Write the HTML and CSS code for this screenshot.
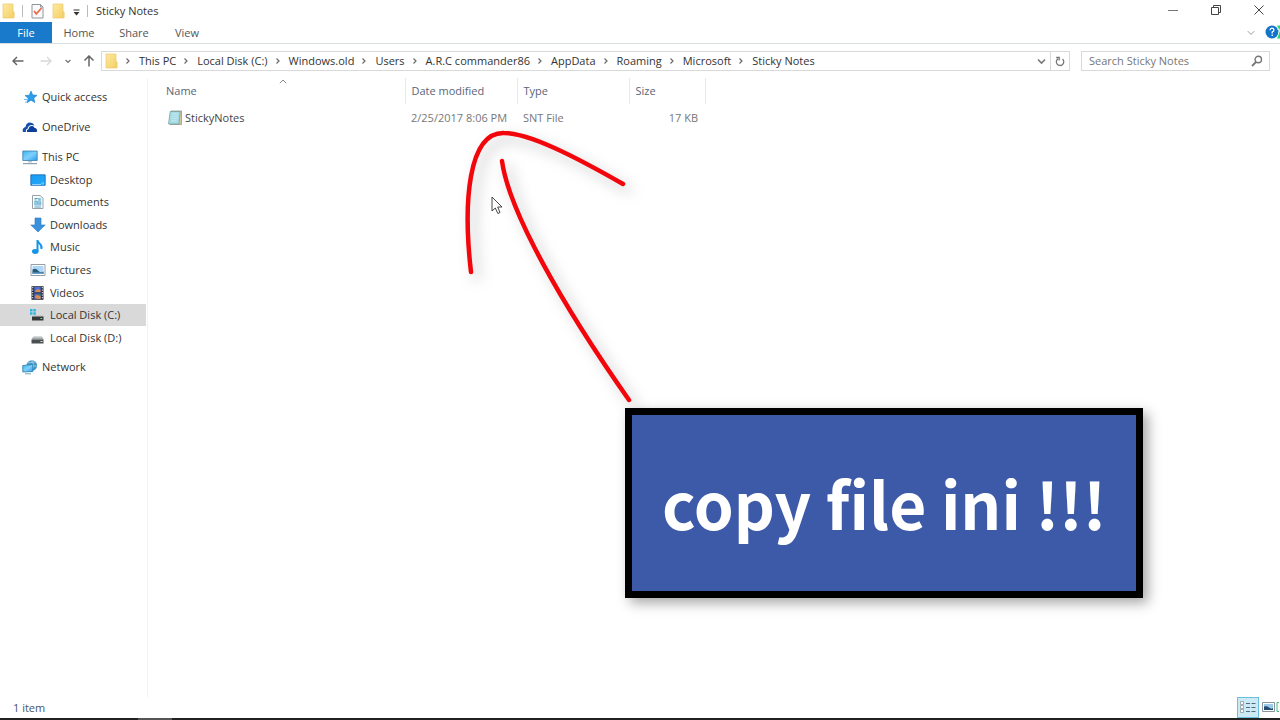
FILE: index.html
```html
<!DOCTYPE html>
<html lang="en">
<head>
<meta charset="utf-8">
<title>Sticky Notes</title>
<link rel="stylesheet" href="styles.css">
</head>
<body>
<svg class="defs" width="0" height="0" aria-hidden="true">
  <defs>
    <linearGradient id="gold" x2="1" y2="1"><stop stop-color="#ffe9a0"/><stop offset="1" stop-color="#f3cf66"/></linearGradient>
    <linearGradient id="screen" x2="1" y2="1"><stop stop-color="#38b6f5"/><stop offset=".5" stop-color="#7fd0fb"/><stop offset="1" stop-color="#2a9cec"/></linearGradient>
    <linearGradient id="sky" x2="1" y2="1"><stop stop-color="#189bf2"/><stop offset="1" stop-color="#23a9fb"/></linearGradient>
    <linearGradient id="metal" y2="1" x2="0"><stop stop-color="#e4e6e8"/><stop offset="1" stop-color="#8c8f92"/></linearGradient>
    <symbol id="folder" viewBox="0 0 13 16"><path d="M1 1h10v7l1 1v6H1z" fill="url(#gold)" stroke="#ecc967" stroke-width=".7"/><path d="M10 9h2.300v5.500H10z" fill="#f3d06a"/></symbol>
    <symbol id="sep" viewBox="0 0 6 8"><path d="M1.500 1.500 4 4 1.500 6.500" fill="none" stroke="#6a6a6a" stroke-width="1.200"/></symbol>
  </defs>
</svg>
<div class="window">
  <header class="titlebar">
    <svg class="folder" width="13" height="16"><use href="#folder"/></svg>
    <span class="bar"></span>
    <button class="quick" aria-label="Properties"><svg width="13" height="16" viewBox="0 0 13 16"><path d="M1 1.500h8.500L12 4v11H1z" fill="#fbfbfc" stroke="#8f979f"/><path d="M9.500 1.500V4H12" fill="none" stroke="#8f979f"/><path d="m3 8 2.300 2.800L10.500 5" fill="none" stroke="#ef6a4b" stroke-width="1.800"/></svg></button>
    <button class="quick" aria-label="New folder"><svg width="13" height="16"><use href="#folder"/></svg></button>
    <button class="quick menu" aria-label="Customize toolbar"><svg width="7" height="7" viewBox="0 0 7 7"><path d="M.5 1h6" stroke="#333"/><path d="M.5 3h6L3.500 6.500z" fill="#333"/></svg></button>
    <span class="bar"></span>
    <h1 class="title">Sticky Notes</h1>
    <div class="controls">
      <button aria-label="Minimize"><svg width="12" height="12" viewBox="0 0 12 12"><path d="M1 6.500h10" stroke="#777"/></svg></button>
      <button aria-label="Restore"><svg width="12" height="12" viewBox="0 0 12 12"><path d="M1.500 3.500h7v7h-7zM3.500 3V1.500h7v7H9" fill="none" stroke="#444"/></svg></button>
      <button aria-label="Close"><svg width="12" height="12" viewBox="0 0 12 12"><path d="m1.500 1.500 9 9m0-9-9 9" stroke="#444"/></svg></button>
    </div>
  </header>
  <nav class="tabs" aria-label="Ribbon">
    <button class="tab file">File</button>
    <button class="tab">Home</button>
    <button class="tab">Share</button>
    <button class="tab">View</button>
    <button class="expand" aria-label="Expand ribbon"><svg width="8" height="6" viewBox="0 0 8 6"><path d="m.8 1.200 3.200 3.200 3.200-3.200" fill="none" stroke="#999"/></svg></button>
    <button class="help" aria-label="Help"><svg width="15" height="14" viewBox="0 0 15 14"><circle cx="7" cy="7" r="6.500" fill="#1474c9"/><path d="M15 .5h-3q4 6 0 13h3z" fill="#2fd671"/><path d="M5 5.200Q5.200 3.200 7 3.200t1.900 1.700Q8.900 6 7.200 7v1.500m0 1v1.500" fill="none" stroke="#fff" stroke-width="1.300"/><path d="M12.500 5Q13.500 3 14.500 4.500T13.500 8v1" fill="none" stroke="#d8ffe4"/></svg></button>
  </nav>
  <div class="addressbar">
    <button class="nav" aria-label="Back"><svg width="12" height="10" viewBox="0 0 12 10"><path d="M5 1 1 5l4 4M1 5h10.500" fill="none" stroke="#666" stroke-width="1.500"/></svg></button>
    <button class="nav" aria-label="Forward"><svg width="12" height="10" viewBox="0 0 12 10"><path d="m7 1 4 4-4 4m4-4H.5" fill="none" stroke="#d8d8d8" stroke-width="1.400"/></svg></button>
    <button class="nav recent" aria-label="Recent locations"><svg width="6" height="5" viewBox="0 0 6 5"><path d="m.6 1 2.400 2.400L5.400 1" fill="none" stroke="#777" stroke-width="1.300"/></svg></button>
    <button class="nav up" aria-label="Up"><svg width="12" height="12" viewBox="0 0 12 12"><path d="M1.500 5.500 6 1l4.500 4.500M6 1v10.500" fill="none" stroke="#666" stroke-width="1.500"/></svg></button>
    <div class="path">
      <svg width="13" height="16"><use href="#folder"/></svg>
      <svg class="sep" width="6" height="8"><use href="#sep"/></svg><button>This PC</button>
      <svg class="sep" width="6" height="8"><use href="#sep"/></svg><button>Local Disk (C:)</button>
      <svg class="sep" width="6" height="8"><use href="#sep"/></svg><button>Windows.old</button>
      <svg class="sep" width="6" height="8"><use href="#sep"/></svg><button>Users</button>
      <svg class="sep" width="6" height="8"><use href="#sep"/></svg><button>A.R.C commander86</button>
      <svg class="sep" width="6" height="8"><use href="#sep"/></svg><button>AppData</button>
      <svg class="sep" width="6" height="8"><use href="#sep"/></svg><button>Roaming</button>
      <svg class="sep" width="6" height="8"><use href="#sep"/></svg><button>Microsoft</button>
      <svg class="sep" width="6" height="8"><use href="#sep"/></svg><button>Sticky Notes</button>
      <button class="drop" aria-label="Previous locations"><svg width="9" height="7" viewBox="0 0 9 7"><path d="m1 1.500 3.500 3.500L8 1.500" fill="none" stroke="#777" stroke-width="1.600"/></svg></button>
      <button class="refresh" aria-label="Refresh"><svg width="10" height="11" viewBox="0 0 10 11"><path d="M7.500 3A3.700 3.700 0 1 1 3 2.700M1.200 1.500h3v3" fill="none" stroke="#777" stroke-width="1.300"/></svg></button>
    </div>
    <label class="search">
      <input type="text" placeholder="Search Sticky Notes" aria-label="Search Sticky Notes">
      <svg width="12" height="12" viewBox="0 0 12 12"><circle cx="7.300" cy="4.500" r="3.200" fill="none" stroke="#777" stroke-width="1.400"/><path d="M5 7 1 11" stroke="#777" stroke-width="1.800"/></svg>
    </label>
  </div>
  <div class="body">
    <nav class="sidebar" aria-label="Navigation pane">
      <a class="item" href="#"><svg width="16" height="16" viewBox="0 0 16 16"><path d="m9 2 1.700 4 4.300.3-3.200 2.900 1 4.300L9 11.200l-3.900 2.500L6.200 9.300 3 6.500l4.300-.3z" fill="#2d9eea" stroke="#167bc9" stroke-width=".6"/><path d="M2 10.500h3M3 13h2" stroke="#68b8ee"/></svg>Quick access</a>
      <a class="item" href="#"><svg width="16" height="16" viewBox="0 0 16 16"><path d="M1 13C0 9.500 2 8.500 3.500 8 4 4 7 2.500 10 4c2 .8 2 2 2.300 2.700C9 5 6 7 5.500 9.800 4 10 3.500 11.500 4 13z" fill="#1650aa"/><path d="M5 13c-.5-1.500.5-2.800 1.600-2.700.2-3.500 4.500-4.500 6-1.200 2 0 3 2 2.200 3.900z" fill="#0c3f98"/></svg>OneDrive</a>
      <div class="group">
        <a class="item" href="#"><svg width="16" height="16" viewBox="0 0 16 16"><path d="M.8 2h14.400v9.500H.8z" fill="url(#screen)" stroke="#3d7ca8" stroke-width=".8"/><path d="M6 12h4v1.500H6z" fill="#b8cbd8"/><path d="M1 14.700h14" stroke="#78909f"/></svg>This PC</a>
        <a class="item sub" href="#"><svg width="16" height="16" viewBox="0 0 16 16"><path d="M.8 2.800h14.400v10.500H.8z" fill="url(#sky)" stroke="#1266b0" stroke-width=".8"/><path d="M2 12.500h9m1-2v2m1.500-2v2" stroke="#a9e1ff" stroke-width=".8"/></svg>Desktop</a>
        <a class="item sub" href="#"><svg width="16" height="16" viewBox="0 0 16 16"><path d="M2.500 1.500h7.500L13 4v10.500H2.500z" fill="#fff" stroke="#8b979f" stroke-width=".9"/><path d="M4.500 4.500h4M4.500 6h2m-2 7h6.500" stroke="#5799ba"/><path d="M4.300 7h7v4.500h-7z" fill="#6fb6d4"/><path d="M5 8.500h2M8 8h2.500M5 10h5.500M8 4h3v3H8z" fill="#72bad5" stroke="#b9e0ea" stroke-width=".7"/></svg>Documents</a>
        <a class="item sub" href="#"><svg width="16" height="16" viewBox="0 0 16 16"><path d="M5 1h6v7h4.200L8 15 .8 8H5z" fill="#3b91dc" stroke="#2879bf" stroke-width=".6"/></svg>Downloads</a>
        <a class="item sub" href="#"><svg width="16" height="16" viewBox="0 0 16 16"><ellipse cx="5.300" cy="12.500" rx="3.300" ry="2.400" fill="#1695e8"/><path d="M7.500 12V1c.5 4 5.500 4 3.800 9" fill="none" stroke="#1695e8" stroke-width="2"/></svg>Music</a>
        <a class="item sub" href="#"><svg width="16" height="16" viewBox="0 0 16 16"><path d="M1 2.500h14v11H1z" fill="#fff" stroke="#8996a0" stroke-width=".9"/><path d="M2.500 4h11v8h-11z" fill="#add7f6"/><path d="M2.500 7.500Q6 5.500 8 8.500t5.500 1V12h-11z" fill="#265a79"/><path d="M2.500 10.500h11V12h-11z" fill="#6aa1c8"/></svg>Pictures</a>
        <a class="item sub" href="#"><svg width="16" height="16" viewBox="0 0 16 16"><path d="M1.500 1.200h12v13.600h-12z" fill="#282c38"/><path d="M2.700 2v12.500M12.300 2v12.500" stroke="#e1e1e1" stroke-width="1.100" stroke-dasharray="1.300 1.200"/><path d="M4.300 2h6.400v5.500H4.300zm0 6.500h6.400V14H4.300z" fill="#526dd1"/><path d="m4.500 7 3-3 3 1v2zm0 5 2-2 4 1v3h-3z" fill="#df8b4c"/><path d="M4.500 9.500h4l2-1v2z" fill="#398448"/></svg>Videos</a>
        <a class="item sub current" href="#" aria-current="page"><svg width="16" height="16" viewBox="0 0 16 16"><path d="M0 2h2.500v2.500H0zm3.300 0h2.500v2.500H3.300zM0 5.200h2.500v2.500H0zm3.300 0h2.500v2.500H3.300z" fill="#2eb5e8"/><path d="m3 9.500 1-1h8.500l1 1z" fill="#bbb"/><path d="M2 9.500h11.500v4H2z" fill="#35393b"/><path d="M10.500 11.500h1.600" stroke="#75eb92"/></svg>Local Disk (C:)</a>
        <a class="item sub" href="#"><svg width="16" height="16" viewBox="0 0 16 16"><path d="m1.500 9.500 2-3.500h8.500l1.500 3.500z" fill="url(#metal)"/><path d="M1.500 9.500h12v4h-12z" fill="#4a4e51"/><path d="M10.500 11.500h2" stroke="#c7ead1"/></svg>Local Disk (D:)</a>
      </div>
      <a class="item" href="#"><svg width="16" height="16" viewBox="0 0 16 16"><circle cx="9.800" cy="6.500" r="5.300" fill="#4697c5"/><path d="M5.500 4q5-1 8-1m-8 4h9m-5-5.500q4 5 0 10" fill="none" stroke="#a4d9ec" stroke-width=".8"/><path d="m.8 6.500 10-1v7l-10 .5z" fill="url(#screen)" stroke="#277ba8" stroke-width=".8"/><path d="M3 14.800h6" stroke="#78a7bd"/></svg>Network</a>
    </nav>
    <main class="files">
      <table>
        <colgroup><col class="c-name"><col class="c-date"><col class="c-type"><col class="c-size"></colgroup>
        <thead><tr>
          <th class="sorted" aria-sort="ascending">Name<svg class="sort" width="8" height="5" viewBox="0 0 8 5"><path d="M.8 4.200 4 1l3.200 3.200" fill="none" stroke="#888"/></svg></th>
          <th>Date modified</th><th>Type</th><th>Size</th>
        </tr></thead>
        <tbody><tr>
          <td class="name"><div><svg width="16" height="16" viewBox="0 0 16 16"><path d="M4 1h10.500v13.500H3z" fill="#d8c89c" stroke="#8f8d76" stroke-width=".7"/><path d="M3.200 1.500h10L12 14H1.500z" fill="#a7dce4" stroke="#6b99a5" stroke-width=".7"/><path d="M5 4h6M4.800 6.300h6M4.500 8.500h6M4.300 10.800h5.500" stroke="#c4ebf0" stroke-width=".9"/></svg>StickyNotes</div></td>
          <td>2/25/2017 8:06 PM</td><td>SNT File</td><td class="size">17 KB</td>
        </tr></tbody>
      </table>
    </main>
  </div>
  <footer class="status">
    <span>1 item</span>
    <div class="views">
      <button class="view on" aria-label="Details view"><svg width="16" height="13" viewBox="0 0 16 13"><path d="M.5.500h3v3h-3zm0 4h3v3h-3zm0 4h3v3h-3z" fill="#fff" stroke="#8b999f" stroke-width=".8"/><path d="M6 2.500h4m1.500 0h4M6 6.500h4m1.500 0h4M6 10.500h4m1.500 0h4" stroke="#526b77"/></svg></button>
      <button class="view" aria-label="Large icons"><svg width="18" height="13" viewBox="0 0 18 13"><path d="M.5 1.500h12v9H.5z" fill="#fff" stroke="#8895a0"/><path d="M2 3h9v6H2z" fill="#9dc8e8"/><path d="M2 5.500q3-1 5 1t4 .5V9H2z" fill="#254c70"/><path d="M17 1.500h-2v9h2" fill="none" stroke="#46b983"/></svg></button>
    </div>
  </footer>
  <div class="taskbar"><span></span></div>
</div>
<svg class="arrow" width="200" height="320" viewBox="0 0 200 320" aria-hidden="true">
  <g fill="none" stroke="#f2060c" stroke-width="4.500" stroke-linecap="round">
    <path d="M21 162C13 93 18 22 54 23C79 23 124 46 173 74"/>
    <path d="M52 51C59 102 113 196 179 290"/>
  </g>
</svg>
<svg class="pointer" width="12" height="19" viewBox="0 0 12 19" aria-hidden="true"><path d="M1 1v14l3.300-3 2.500 5.500 2.200-1L6.700 11H11z" fill="#fff" stroke="#333" stroke-width=".9"/></svg>
<aside class="callout">copy file ini !!!</aside>
</body>
</html>
```

FILE: styles.css
```css
* { box-sizing: border-box; }
body {
  margin: 0;
  background: #fff;
  color: #333;
  font: 11px/16px "Open Sans", "Noto Sans", sans-serif;
  overflow: hidden;
}
button { margin: 0; padding: 0; border: 0; background: none; color: inherit; font: inherit; }
svg { display: block; flex: none; }
.defs { position: absolute; }
.window { display: flex; flex-direction: column; min-height: 100vh; }

.titlebar { display: flex; align-items: center; height: 22px; padding-left: 2px; }
.bar { width: 1px; height: 12px; margin: 0 8px 0 7px; background: #bbb; }
.quick { margin-right: 8px; }
.quick.menu { margin-right: 0; padding-top: 3px; }
.title { margin: 0; font-size: 11px; font-weight: 400; }
.controls { display: flex; gap: 31px; margin-left: auto; padding: 0 15px 3px 0; }

.tabs { display: flex; align-items: stretch; height: 22px; border-bottom: 1px solid #dadfe2; color: #555; }
.tab { width: 54px; }
.tab.file { width: 52px; background: #1979ca; color: #fff; }
.tab:nth-child(3) { width: 56px; }
.tab:nth-child(4) { width: 50px; }
.expand { margin-left: auto; padding-right: 10px; }
.help { margin-top: -1px; }

.addressbar { display: flex; align-items: center; height: 34px; padding: 0 10px 0 12px; }
.nav { margin-right: 16px; }
.nav:nth-child(2) { margin-right: 13px; }
.nav.recent { margin-right: 12px; }
.nav.up { margin-right: 6px; }
.path { display: flex; flex: 1; align-items: center; height: 20px; border: 1px solid #d9d9d9; padding-left: 3px; white-space: nowrap; }
.sep { margin: 0 8px 0 7px; }
.drop { margin-left: auto; padding-right: 4px; }
.refresh { display: flex; align-items: center; height: 18px; padding: 0 4px; border-left: 1px solid #d9d9d9; }
.search { display: flex; align-items: center; width: 189px; height: 20px; margin-left: 11px; padding: 0 6px 0 7px; border: 1px solid #d9d9d9; }
.search input { flex: 1; min-width: 0; padding: 0; border: 0; outline: 0; background: none; font: inherit; }
.search input::placeholder { color: #777; opacity: 1; }

.body { display: flex; flex: 1; }
.sidebar { width: 148px; padding: 8px 1px 0 0; border-right: 1px solid #f3f3f3; }
.item { display: flex; align-items: center; gap: 4px; height: 22px; margin-bottom: 8px; padding-left: 22px; color: #333; text-decoration: none; }
.group { display: grid; grid-auto-rows: 1fr; height: 203px; margin-bottom: 7px; }
.group .item { height: auto; margin: 0; }
.item.sub { padding-left: 30px; }
.item.current { background: #d9d9d9; }

.files { flex: 1; }
table { table-layout: fixed; width: 557px; border-collapse: collapse; }
.c-name { width: 257px; }
.c-date, .c-type { width: 112px; }
.c-size { width: 76px; }
th { position: relative; height: 26px; padding: 0 0 0 6px; border-right: 1px solid #e8e8e8; color: #596579; font-weight: 400; text-align: left; }
th.sorted { padding-left: 18px; }
.sort { position: absolute; top: 1px; left: 131px; }
td { height: 28px; padding: 0 0 0 6px; color: #777; }
td.name { padding-left: 19px; color: #444; }
td.name div { display: flex; align-items: center; gap: 2px; }
td.size { padding-right: 7px; text-align: right; }

.status { display: flex; align-items: center; height: 21px; padding-left: 13px; color: #465569; }
.views { display: flex; align-self: stretch; margin-left: auto; }
.view { display: flex; align-items: center; padding-left: 3px; }
.view.on { padding: 0 2px; border: 1px solid #6cc0dc; background: #cceaf6; }
.taskbar { height: 2px; padding-left: 138px; background: #222; }
.taskbar span { display: block; width: 34px; height: 2px; background: #555; }

.arrow { position: absolute; top: 110px; left: 450px; filter: drop-shadow(6px 6px 7px rgba(0, 0, 0, .25)); }
.pointer { position: absolute; top: 196px; left: 491px; }
.callout {
  position: absolute;
  top: 408px;
  left: 625px;
  padding: 39px 30px 41px;
  border: 7px solid #000;
  background: #3c5aa8;
  box-shadow: 5px 5px 12px rgba(0, 0, 0, .35);
  color: #fff;
  font: 700 64px/96px "Noto Sans CJK SC", sans-serif;
  white-space: nowrap;
}
```
